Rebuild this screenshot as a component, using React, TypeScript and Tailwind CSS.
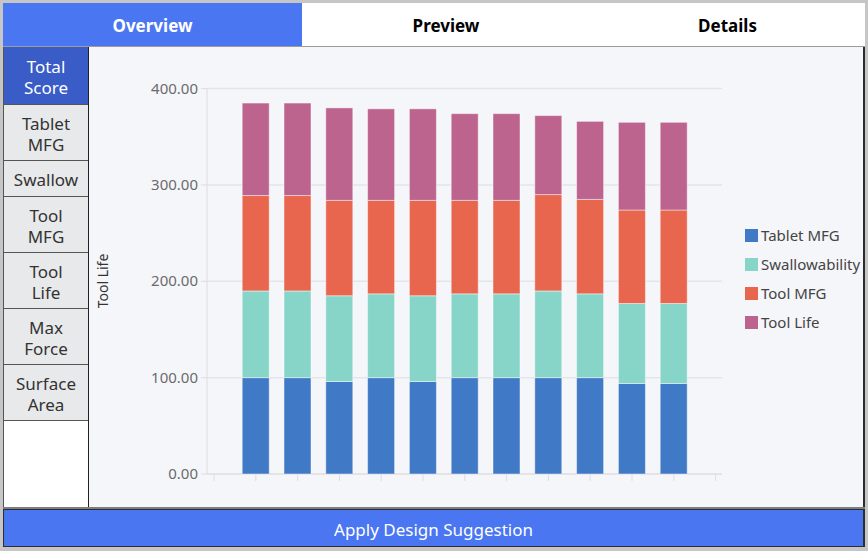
import React from 'react'

const FONT = '"Noto Sans", "Open Sans", "Liberation Sans", sans-serif'

// cumulative stack values per design: tablet, swallow, toolMfg, toolLife
const bars = [
  [100, 190, 289, 385],
  [100, 190, 289, 385],
  [96, 185, 284, 380],
  [100, 187, 284, 379],
  [96, 185, 284, 379],
  [100, 187, 284, 374],
  [100, 187, 284, 374],
  [100, 190, 290, 372],
  [100, 187, 285, 366],
  [94, 177, 274, 365],
  [94, 177, 274, 365],
]

const colors = ['#4079c5', '#86d5c8', '#e8654e', '#bd648e']
const series = ['Tablet MFG', 'Swallowability', 'Tool MFG', 'Tool Life']

const y0 = 474
const k = 0.9635
const yOf = (v: number) => y0 - v * k
const step = 41.8

const sideItems = [
  { label: ['Total', 'Score'], h: 'h-[58px]', active: true },
  { label: ['Tablet', 'MFG'], h: 'h-[56px]' },
  { label: ['Swallow'], h: 'h-[36px]' },
  { label: ['Tool', 'MFG'], h: 'h-[56px]' },
  { label: ['Tool', 'Life'], h: 'h-[56px]' },
  { label: ['Max', 'Force'], h: 'h-[56px]' },
  { label: ['Surface', 'Area'], h: 'h-[56px]' },
]

function Chart() {
  return (
    <svg width={773} height={460} viewBox="89 47 773 460" className="block" style={{ fontFamily: FONT }}>
      {[0, 100, 200, 300, 400].map((v) => (
        <g key={v}>
          {v > 0 && <line x1={207} x2={722} y1={yOf(v)} y2={yOf(v)} stroke="#e3e5ea" strokeWidth={1.5} />}
          <line x1={201} x2={207} y1={yOf(v)} y2={yOf(v)} stroke="#dcdde2" strokeWidth={1} />
          <text x={198} y={yOf(v) + 5} textAnchor="end" fontSize={15} fill="#6b6b6b">
            {v.toFixed(2)}
          </text>
        </g>
      ))}
      <line x1={207} x2={207} y1={yOf(400)} y2={y0} stroke="#dcdde2" strokeWidth={1} />
      <line x1={207} x2={722} y1={y0} y2={y0} stroke="#dcdde2" strokeWidth={1.5} />
      {Array.from({ length: 13 }).map((_, i) => (
        <line key={i} x1={214 + step * i} x2={214 + step * i} y1={y0} y2={y0 + 7} stroke="#dcdde2" strokeWidth={1} />
      ))}
      {bars.map((b, i) => {
        const cx = 255.7 + step * i
        return (
          <g key={i}>
            {b.map((v, j) => {
              const lo = j === 0 ? 0 : b[j - 1]
              return (
                <rect
                  key={j}
                  x={cx - 13.5}
                  width={27}
                  y={yOf(v)}
                  height={yOf(lo) - yOf(v)}
                  fill={colors[j]}
                  stroke="rgba(255,255,255,0.45)"
                  strokeWidth={1}
                />
              )
            })}
          </g>
        )
      })}
      <text x={108} y={281} transform="rotate(-90 108 281)" textAnchor="middle" fontSize={14} fill="#333">
        Tool Life
      </text>
      {series.map((s, i) => (
        <g key={s}>
          <rect x={745} y={229 + i * 29} width={13} height={13} fill={colors[i]} />
          <text x={761} y={241 + i * 29} fontSize={15} fill="#444">
            {s}
          </text>
        </g>
      ))}
    </svg>
  )
}

export default function App() {
  return (
    <div className="w-[868px] h-[551px] bg-[#c6c6c6] p-[3px] flex flex-col" style={{ fontFamily: FONT }}>
      <div className="h-[44px] flex bg-white border-b border-[#9c9c9c] text-[17px] font-bold text-black">
        <div className="w-[299px] bg-[#4a76f2] text-white flex items-center justify-center pt-[3px]">Overview</div>
        <div className="w-[288px] flex items-center justify-center pt-[3px]">Preview</div>
        <div className="flex-1 flex items-center justify-center pt-[3px]">Details</div>
      </div>
      <div className="h-[460px] flex">
        <div className="w-[86px] bg-white border-l border-[#555] border-r border-r-[#222] flex flex-col">
          {sideItems.map((it) => (
            <div
              key={it.label.join(' ')}
              className={`${it.h} flex flex-col items-center justify-center pt-[2px] border-b border-[#555] text-[17px] leading-[21px] ${
                it.active ? 'bg-[#3a5cc6] text-white' : 'bg-[#e8e9ea] text-[#333]'
              }`}
            >
              {it.label.map((l) => (
                <span key={l}>{l}</span>
              ))}
            </div>
          ))}
        </div>
        <div className="flex-1 bg-[#f5f6fa] border-r-2 border-[#2b2b2b]">
          <Chart />
        </div>
      </div>
      <div className="h-[2px] bg-[#7e7e7e]" />
      <div className="h-[38px] bg-[#4a76f2] border border-[#2e2e2e] border-r-2 flex items-center justify-center pt-[3px] text-white text-[17px]">
        Apply Design Suggestion
      </div>
    </div>
  )
}
